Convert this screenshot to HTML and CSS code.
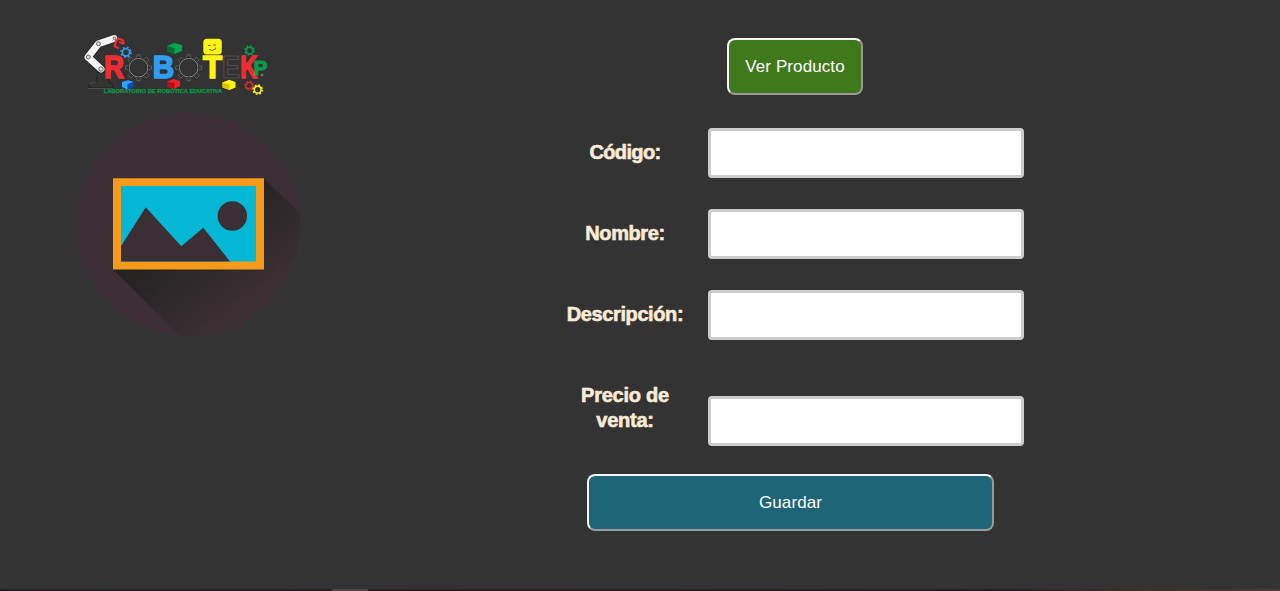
FILE: index.html
```html
<!DOCTYPE html>
<html lang="es">
<head>
<meta charset="utf-8">
<title>Producto</title>
<link rel="stylesheet" href="styles.css">
</head>
<body>
<main class="page">
  <aside class="brand">
    <svg class="logo" viewBox="80 32 192 68" aria-label="Robotek">
      <defs>
        <g id="gear">
          <circle r="3.6" fill="none" stroke="currentColor" stroke-width="1.6"/>
          <circle r="4.9" fill="none" stroke="currentColor" stroke-width="1.8" stroke-dasharray="1.925 1.925"/>
        </g>
        <g id="wheel" fill="none">
          <path d="M-2-10-1.500-13H1.500L2-10 5.500-8.500 8-10.500 10.500-8 8.500-5.500 10-2 13-1.500V1.500L10 2 8.500 5.500 10.500 8 8 10.500 5.500 8.500 2 10 1.500 13H-1.500L-2 10-5.500 8.500-8 10.500-10.500 8-8.500 5.500-10 2-13 1.500V-1.500L-10-2-8.500-5.500-10.500-8-8-10.500-5.500-8.500Z" stroke="#747474" stroke-width=".6"/>
          <circle r="10" stroke="#222" stroke-width=".9"/>
          <circle r="9.200" stroke="#aaa" stroke-width=".8"/>
          <circle r="8.400" stroke="#222" stroke-width=".6"/>
        </g>
      </defs>
      <path d="M89 88V84L96 82 97.500 72H107L109 82 113 84V88Z" fill="#333" stroke="#1b1b1b" stroke-width=".7"/>
      <path d="M88.500 88.500H113M89 84 96 82" stroke="#666" stroke-width=".6" fill="none"/>
      <path d="M114 38.500 98.500 43.700 88 57.200 101 69" fill="none" stroke="#222" stroke-width="8.400" stroke-linejoin="round" stroke-linecap="round"/>
      <path d="M114 38.500 98.500 43.700 88 57.200 101 69" fill="none" stroke="#f5f5f5" stroke-width="7" stroke-linejoin="round" stroke-linecap="round"/>
      <g fill="#ddd" stroke="#444" stroke-width=".8">
        <circle cx="98.500" cy="43.700" r="2"/><circle cx="88.300" cy="57" r="2"/><circle cx="101" cy="69" r="2.200"/><circle cx="114.500" cy="38.300" r="1.400"/>
      </g>
      <path d="M114.500 47 116 41 118.500 38.500 122.500 40 124 44M114.500 46.500 119 48M119 42 124 44" fill="none" stroke="#e82c30" stroke-width="2.300"/>
      <use href="#gear" x="126" y="52.300" color="#2f9df4"/>
      <use href="#wheel" x="138.500" y="67.700"/>
      <use href="#wheel" x="188.700" y="67.700"/>
      <g class="logo-letters">
        <text x="104" y="78.300" textLength="20" lengthAdjust="spacingAndGlyphs" fill="#ee2d33" stroke="#ee2d33">R</text>
        <text x="152.800" y="78.300" textLength="21.500" lengthAdjust="spacingAndGlyphs" fill="#2f9df4" stroke="#2f9df4">B</text>
        <text x="203" y="78.300" textLength="19" lengthAdjust="spacingAndGlyphs" fill="#fff215" stroke="#fff215">T</text>
        <text x="222" y="78.300" textLength="18" lengthAdjust="spacingAndGlyphs" class="letter-outline">E</text>
        <text x="240.300" y="78.300" textLength="17" lengthAdjust="spacingAndGlyphs" fill="#ee2d33" stroke="#ee2d33">K</text>
      </g>
      <text x="253.500" y="74.500" textLength="14" lengthAdjust="spacingAndGlyphs" class="letter-p">P</text>
      <circle cx="262" cy="75" r="1.300" fill="#777"/>
      <rect x="203.300" y="38.800" width="18.500" height="15.600" rx="3.500" fill="#fff215"/>
      <path d="M208 45.500H210.500M213.500 45H216M209 49.500Q212 51.500 215.500 49V47.500" fill="none" stroke="#6b6500" stroke-width="1"/>
      <path d="M167 46 174 43 182 45V51L174.500 54 167 51Z" fill="#00a64f"/>
      <path d="M167 46 174.500 48V54L167 51Z" fill="#006d2c"/>
      <path d="M167 81.500 174 79 180 81V86L174.500 89 167 86.500Z" fill="#ee2028"/>
      <path d="M167 81.500 174.500 83V89L167 86.500Z" fill="#b80d18"/>
      <path d="M222.500 82.500 229 79.800 235.500 82V87.500L229.500 90 222.500 87.500Z" fill="#fff215"/>
      <path d="M222.500 82.500 229.500 84.500V90L222.500 87.500Z" fill="#e1c500"/>
      <path d="M122 82 128 80.300 133.500 82V87L127.500 89.500 122 87Z" fill="#0549b8"/>
      <path d="M122 82 128 80.300 133.500 82 127.500 84V89.500L122 87Z" fill="#30a5ff"/>
      <use href="#gear" transform="translate(249.500 50.500) scale(.92)" color="#079b4b"/>
      <use href="#gear" transform="translate(249.300 85.700) scale(.88)" color="#cf2a30"/>
      <use href="#gear" transform="translate(257.700 89.700) scale(.93)" color="#fff215"/>
      <text x="103.700" y="92.700" textLength="118.500" lengthAdjust="spacingAndGlyphs" class="tagline">LABORATORIO DE ROBÓTICA EDUCATIVA</text>
    </svg>
    <svg class="picture" viewBox="76 112 226 226" aria-label="Imagen">
      <defs>
        <clipPath id="disc"><circle cx="188.400" cy="224.500" r="112"/></clipPath>
        <linearGradient id="shade" gradientUnits="userSpaceOnUse" x1="165" y1="245" x2="225" y2="325">
          <stop offset="0" stop-color="#252222"/><stop offset=".5" stop-color="#302a2c"/><stop offset="1" stop-color="#3b2f34"/>
        </linearGradient>
      </defs>
      <circle cx="188.400" cy="224.500" r="112" fill="#3b2e34"/>
      <path d="M264 178.500 364 275 278 434 113 269.500Z" fill="url(#shade)" clip-path="url(#disc)"/>
      <path d="M113 178.300H264V269.500H113Z" fill="#f59a1b"/>
      <path d="M121 186H256V261.500H121Z" fill="#03b7d5"/>
      <path d="M121 246.300 145.700 207.300 181.300 246.300 203.300 227.700 230 261.500H121Z" fill="#3b2e34"/>
      <circle cx="232.300" cy="216" r="14.700" fill="#3b2e34"/>
    </svg>
  </aside>
  <form class="form">
    <button type="button" class="btn btn-view">Ver Producto</button>
    <label class="row"><span class="caption caption-code">Código:</span><input class="field" type="text"></label>
    <label class="row"><span class="caption">Nombre:</span><input class="field" type="text"></label>
    <label class="row"><span class="caption">Descripción:</span><input class="field" type="text"></label>
    <label class="row row-price"><span class="caption">Precio de venta:</span><input class="field" type="text"></label>
    <button type="button" class="btn btn-save">Guardar</button>
  </form>
</main>
<footer class="strip"><span class="strip-mark"></span></footer>
</body>
</html>
```
FILE: styles.css
```css
* { box-sizing: border-box; }

body {
  display: flex;
  flex-direction: column;
  height: 591px;
  margin: 0;
  overflow: hidden;
  background: #333;
  font-family: "Liberation Sans", Arial, sans-serif;
}

.page {
  display: flex;
  flex: 1;
  gap: 256px;
  padding: 32px 0 0 76px;
}

.brand {
  display: flex;
  flex-direction: column;
  gap: 12px;
  width: 226px;
}

.logo { width: 192px; height: 68px; margin-left: 4px; }
.picture { width: 226px; height: 226px; }

.logo-letters { font-size: 31px; font-weight: 700; stroke-width: 1.6px; }
.letter-outline { fill: #333; stroke: #606060; stroke-width: .7px; }
.letter-p { font-size: 21px; font-weight: 700; fill: #079b4b; stroke: #079b4b; stroke-width: 1px; }
.tagline { font-size: 5.8px; font-weight: 700; fill: #079b4b; stroke: #079b4b; stroke-width: .25px; }

.form {
  display: flex;
  flex-direction: column;
  width: 466px;
  padding-top: 6px;
}

.btn {
  height: 57px;
  padding: 0;
  border: 2px solid;
  border-color: #f4f4f4 #999 #999 #f4f4f4;
  border-radius: 8px;
  color: #fff;
  font: 17px "Liberation Sans", Arial, sans-serif;
  letter-spacing: .1px;
}

.btn-view { width: 136px; margin: 0 0 33px 169px; background: #40791c; }
.btn-save { width: 407px; margin: 28px 0 0 29px; background: #1d6577; }

.row {
  display: grid;
  grid-template-columns: 134px 316px;
  column-gap: 16px;
  margin-bottom: 31px;
}

.caption {
  padding-top: 12px;
  color: #faebd7;
  font-size: 20px;
  font-weight: 700;
  letter-spacing: -.4px;
  line-height: 25px;
  text-align: center;
  -webkit-text-stroke: .6px #faebd7;
}

.caption-code { letter-spacing: -.65px; }

.row-price { margin: 13px 0 0; }
.row-price .caption { margin-top: -1px; padding: 0 20px; letter-spacing: -.25px; }
.row-price .field { margin-top: 12px; }

.field {
  width: 316px;
  height: 50px;
  border: 3px solid #ccc;
  border-radius: 4px;
  background: #fff;
}

.strip {
  display: flex;
  height: 2px;
  padding-left: 332px;
  background: linear-gradient(90deg, #1f1c1f, #2b1f1e 35%, #292020 60%, #201a1e 75%, #403128 90%, #4b3b2d);
}

.strip-mark { width: 36px; background: #514743; }
```
